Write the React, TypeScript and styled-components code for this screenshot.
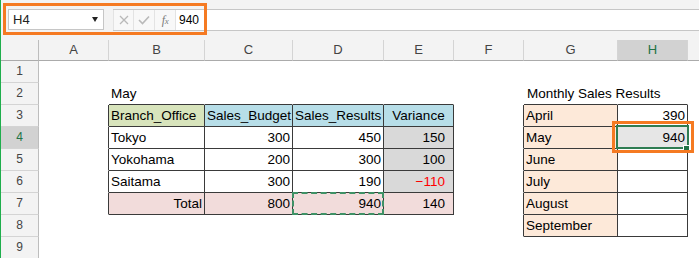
import styled, { createGlobalStyle } from 'styled-components';

const GlobalStyle = createGlobalStyle`
    html, body {
        margin: 0;
        padding: 0;
        background: #ffffff;
    }
    body {
        font-family: "Liberation Sans", Arial, sans-serif;
    }
`;

const GREEN_HEAD = '#d8e4bc';
const BLUE_HEAD = '#b7dee8';
const GRAY_FILL = '#d9d9d9';
const PINK_FILL = '#f2dcdb';
const PEACH_FILL = '#fde9d9';
const BORDER_DARK = '#3a3a3a';
const ORANGE = '#f57a22';
const EXCEL_GREEN = '#217346';

const COLS = ['A', 'B', 'C', 'D', 'E', 'F', 'G', 'H'];
const ROWS = [1, 2, 3, 4, 5, 6, 7, 8, 9];

type CellDef = {
    text?: string;
    bg?: string;
    align?: 'left' | 'right' | 'center';
    color?: string;
    padL?: number;
    padR?: number;
    table?: boolean;
    selected?: boolean;
    copied?: boolean;
};

const cells: Record<string, CellDef> = {
    B2: { text: 'May' },
    G2: { text: 'Monthly Sales Results', padL: 3 },

    B3: { text: 'Branch_Office', bg: GREEN_HEAD, table: true },
    C3: { text: 'Sales_Budget', bg: BLUE_HEAD, table: true },
    D3: { text: 'Sales_Results', bg: BLUE_HEAD, table: true },
    E3: { text: 'Variance', bg: BLUE_HEAD, align: 'center', table: true },

    B4: { text: 'Tokyo', table: true },
    C4: { text: '300', align: 'right', table: true },
    D4: { text: '450', align: 'right', table: true },
    E4: { text: '150', align: 'right', padR: 8, bg: GRAY_FILL, table: true },

    B5: { text: 'Yokohama', table: true },
    C5: { text: '200', align: 'right', table: true },
    D5: { text: '300', align: 'right', table: true },
    E5: { text: '100', align: 'right', padR: 8, bg: GRAY_FILL, table: true },

    B6: { text: 'Saitama', table: true },
    C6: { text: '300', align: 'right', table: true },
    D6: { text: '190', align: 'right', table: true },
    E6: { text: '\u2212110', align: 'right', padR: 8, bg: GRAY_FILL, color: '#ff0000', table: true },

    B7: { text: 'Total', align: 'right', bg: PINK_FILL, table: true },
    C7: { text: '800', align: 'right', bg: PINK_FILL, table: true },
    D7: { text: '940', align: 'right', bg: PINK_FILL, table: true, copied: true },
    E7: { text: '140', align: 'right', padR: 8, bg: PINK_FILL, table: true },

    G3: { text: 'April', bg: PEACH_FILL, table: true },
    H3: { text: '390', align: 'right', table: true },
    G4: { text: 'May', bg: PEACH_FILL, table: true },
    H4: { text: '940', align: 'right', table: true, selected: true },
    G5: { text: 'June', bg: PEACH_FILL, table: true },
    H5: { table: true },
    G6: { text: 'July', bg: PEACH_FILL, table: true },
    H6: { table: true },
    G7: { text: 'August', bg: PEACH_FILL, table: true },
    H7: { table: true },
    G8: { text: 'September', bg: PEACH_FILL, table: true },
    H8: { table: true },
};

const inTable = (row: number, col: number) => {
    if (col < 0 || col >= COLS.length) return false;
    return !!cells[`${COLS[col]}${row}`]?.table;
};

const Window = styled.div`
    width: 699px;
    height: 258px;
    border-left: 1px solid #1fae4c;
    box-sizing: border-box;
    overflow: hidden;
    display: flex;
    flex-direction: column;
    background: #ffffff;
`;

const FormulaArea = styled.div`
    position: relative;
    flex: 0 0 40px;
    background: #f3f3f3;
    display: flex;
    align-items: flex-start;
    padding: 9px 0 0 7px;
    box-sizing: border-box;
`;

const NameBox = styled.div`
    width: 96px;
    height: 21px;
    margin-right: 9px;
    box-sizing: border-box;
    border: 1px solid #c6c6c6;
    background: #ffffff;
    display: flex;
    align-items: center;
    justify-content: space-between;
    padding: 0 5px 0 4px;
    font-size: 13px;
    color: #222;
`;

const DropArrow = styled.span`
    width: 0;
    height: 0;
    border-left: 3.5px solid transparent;
    border-right: 3.5px solid transparent;
    border-top: 5px solid #222;
`;

const FormulaBox = styled.div`
    flex: 1;
    height: 22px;
    box-sizing: border-box;
    display: flex;
    border-top: 1px solid #c6c6c6;
    border-bottom: 1px solid #c6c6c6;
    background: #ffffff;
`;

const ToolButton = styled.div`
    width: 21px;
    box-sizing: border-box;
    border-right: 1px solid #e3e3e3;
    background: #f8f8f8;
    display: flex;
    align-items: center;
    justify-content: center;
    &:first-child {
        border-left: 1px solid #e3e3e3;
    }
`;

const FxLabel = styled.span`
    font-family: "Liberation Serif", "Times New Roman", serif;
    font-style: italic;
    font-size: 12px;
    color: #7a7a7a;
    letter-spacing: -0.5px;
    & small {
        font-size: 9px;
    }
`;

const FormulaInput = styled.div`
    flex: 1;
    padding-left: 3px;
    font-size: 12px;
    line-height: 20px;
    color: #000;
`;

const Callout = styled.span`
    position: absolute;
    box-sizing: border-box;
    border: 3px solid ${ORANGE};
    pointer-events: none;
`;

const BarCallout = styled(Callout)`
    left: 2px;
    top: 3px;
    width: 204px;
    height: 32px;
`;

const CellCallout = styled(Callout)`
    left: -6px;
    right: -7px;
    top: -6px;
    bottom: -5px;
    z-index: 3;
`;

const Sheet = styled.div`
    display: grid;
    grid-template-columns: 38px 70px 96px 88px 91px 70px 70px 94px 70px 1fr;
    grid-template-rows: 21px repeat(9, 22px);
`;

const Corner = styled.div`
    background: #f3f3f3;
    border-right: 1px solid #bdbdbd;
    border-bottom: 1px solid #ababab;
`;

const ColHead = styled.div<{ $active?: boolean }>`
    background: ${(p) => (p.$active ? '#d2d2d2' : '#f3f3f3')};
    color: ${(p) => (p.$active ? EXCEL_GREEN : '#444')};
    border-right: 1px solid #d4d4d4;
    border-bottom: 1px solid #ababab;
    font-size: 13px;
    line-height: 20px;
    text-align: center;
`;

const RowHead = styled.div<{ $active?: boolean }>`
    background: ${(p) => (p.$active ? '#d2d2d2' : '#f3f3f3')};
    color: ${(p) => (p.$active ? EXCEL_GREEN : '#444')};
    border-right: 1px solid #bdbdbd;
    border-bottom: 1px solid #d4d4d4;
    font-size: 12px;
    line-height: 21px;
    text-align: center;
`;

const Cell = styled.div<{
    $bg?: string;
    $align: string;
    $color?: string;
    $padL: number;
    $padR: number;
    $right: string;
    $bottom: string;
    $selected?: boolean;
    $copied?: boolean;
}>`
    position: relative;
    box-sizing: border-box;
    background: ${(p) => (p.$selected ? '#e6e6e6' : p.$bg || 'transparent')};
    color: ${(p) => p.$color || '#000'};
    text-align: ${(p) => p.$align};
    padding: 0 ${(p) => p.$padR}px 0 ${(p) => p.$padL}px;
    border-right: 1px solid ${(p) => p.$right};
    border-bottom: 1px solid ${(p) => p.$bottom};
    font-size: 13.5px;
    line-height: 21px;
    white-space: nowrap;
    overflow: visible;

    ${(p) =>
        p.$selected &&
        `
        &::before {
            content: '';
            position: absolute;
            left: -2px;
            right: -2px;
            top: -2px;
            bottom: -1px;
            border: 2px solid #2f7d52;
            z-index: 1;
        }
        &::after {
            content: '';
            position: absolute;
            width: 5px;
            height: 5px;
            right: -3px;
            bottom: -4px;
            background: ${EXCEL_GREEN};
            border: 1px solid #ffffff;
            z-index: 2;
        }
    `}

    ${(p) =>
        p.$copied &&
        `
        &::after {
            content: '';
            position: absolute;
            left: -1px;
            right: -1px;
            top: -1px;
            bottom: -1px;
            border: 2px dashed #3f9266;
            z-index: 1;
        }
    `}
`;

const Filler = styled.div<{ $head?: boolean }>`
    background: ${(p) => (p.$head ? '#f3f3f3' : 'transparent')};
    border-bottom: ${(p) => (p.$head ? '1px solid #ababab' : 'none')};
`;

const CloseIcon = () => (
    <svg width='10' height='10' viewBox='0 0 10 10'>
        <path d='M1 1 L9 9 M9 1 L1 9' stroke='#b9b9b9' strokeWidth='1.3' fill='none' />
    </svg>
);

const CheckIcon = () => (
    <svg width='12' height='10' viewBox='0 0 12 10'>
        <path d='M1 5 L4.5 8.5 L11 1.5' stroke='#b9b9b9' strokeWidth='1.6' fill='none' />
    </svg>
);

const App = () => {
    return (
        <>
            <GlobalStyle />
            <Window>
                <FormulaArea>
                    <NameBox>
                        H4
                        <DropArrow />
                    </NameBox>
                    <FormulaBox>
                        <ToolButton>
                            <CloseIcon />
                        </ToolButton>
                        <ToolButton>
                            <CheckIcon />
                        </ToolButton>
                        <ToolButton>
                            <FxLabel>
                                f<small>x</small>
                            </FxLabel>
                        </ToolButton>
                        <FormulaInput>940</FormulaInput>
                    </FormulaBox>
                    <BarCallout />
                </FormulaArea>

                <Sheet>
                    <Corner />
                    {COLS.map((c) => (
                        <ColHead key={c} $active={c === 'H'}>
                            {c}
                        </ColHead>
                    ))}
                    <Filler $head />

                    {ROWS.map((r) => (
                        <Row key={r} row={r} />
                    ))}
                </Sheet>
            </Window>
        </>
    );
};

const Row = ({ row }: { row: number }) => (
    <>
        <RowHead $active={row === 4}>{row}</RowHead>
        {COLS.map((c, ci) => {
            const def = cells[`${c}${row}`] || {};
            const right = inTable(row, ci) || inTable(row, ci + 1) ? BORDER_DARK : 'transparent';
            const bottom = inTable(row, ci) || inTable(row + 1, ci) ? BORDER_DARK : 'transparent';
            return (
                <Cell
                    key={c}
                    $bg={def.bg}
                    $align={def.align || 'left'}
                    $color={def.color}
                    $padL={def.padL ?? 2}
                    $padR={def.padR ?? 2}
                    $right={right}
                    $bottom={bottom}
                    $selected={def.selected}
                    $copied={def.copied}
                >
                    {def.text}
                    {def.selected && <CellCallout />}
                </Cell>
            );
        })}
        <Filler />
    </>
);

export default App;
